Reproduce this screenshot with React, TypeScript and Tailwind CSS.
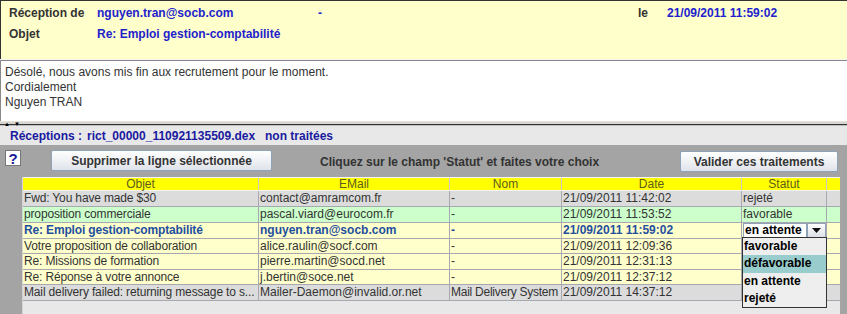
// Mail reception screen: header of the selected message, its body, and the
// list of received mails with a status combo per row.

const FONT = { fontFamily: '"Liberation Sans", Arial, sans-serif' };

type Row = {
  objet: string;
  email: string;
  nom: string;
  date: string;
  statut: string;
  bg: string;
  h: string;
  selected?: boolean;
};

const ROWS: Row[] = [
  { objet: 'Fwd: You have made $30', email: 'contact@amramcom.fr', nom: '-', date: '21/09/2011 11:42:02', statut: 'rejeté', bg: 'bg-[#dcdcdc]', h: 'h-[16px]' },
  { objet: 'proposition commerciale', email: 'pascal.viard@eurocom.fr', nom: '-', date: '21/09/2011 11:53:52', statut: 'favorable', bg: 'bg-[#ccffcc]', h: 'h-[16px]' },
  { objet: 'Re: Emploi gestion-comptabilité', email: 'nguyen.tran@socb.com', nom: '-', date: '21/09/2011 11:59:02', statut: 'en attente', bg: 'bg-[#ffffcc]', h: 'h-[16px]', selected: true },
  { objet: 'Votre proposition de collaboration', email: 'alice.raulin@socf.com', nom: '-', date: '21/09/2011 12:09:36', statut: '', bg: 'bg-[#ffffcc]', h: 'h-[15px]' },
  { objet: 'Re: Missions de formation', email: 'pierre.martin@socd.net', nom: '-', date: '21/09/2011 12:31:13', statut: '', bg: 'bg-[#ffffcc]', h: 'h-[16px]' },
  { objet: 'Re: Réponse à votre annonce', email: 'j.bertin@soce.net', nom: '-', date: '21/09/2011 12:37:12', statut: '', bg: 'bg-[#ffffcc]', h: 'h-[15px]' },
  { objet: 'Mail delivery failed: returning message to s...', email: 'Mailer-Daemon@invalid.or.net', nom: 'Mail Delivery System', date: '21/09/2011 14:37:12', statut: '', bg: 'bg-[#dcdcdc]', h: 'h-[16px]' },
];

const COLS = ['w-[236px]', 'w-[191px]', 'w-[112px]', 'w-[180px]', 'w-[85px]'];

function Cell({ w, children, cls = '' }: { w: string; children?: React.ReactNode; cls?: string }) {
  return (
    <div className={`${w} shrink-0 overflow-hidden whitespace-nowrap border-r border-[#a8a8b0] pl-[1px] leading-[15px] ${cls}`}>
      {children}
    </div>
  );
}

function Button({ label, w }: { label: string; w: string }) {
  return (
    <div
      className={`${w} flex h-[21px] items-center justify-center rounded-[2px] border border-[#8fa3b8] bg-gradient-to-b from-white to-[#dfe3ea] text-[12px] font-bold text-[#333]`}
    >
      {label}
    </div>
  );
}

export default function App() {
  return (
    <div style={FONT} className="flex h-[314px] w-[847px] flex-col overflow-hidden bg-white text-[12px] text-[#333]">
      {/* message header */}
      <div className="h-[59px] shrink-0 border-l border-t border-[#333] bg-[#ffffcc] pt-[5px] font-bold">
        <div className="flex h-[21px] leading-[14px]">
          <span className="w-[96px] shrink-0 pl-[8px]">Réception de</span>
          <span className="w-[221px] shrink-0 text-[#2222cc]">nguyen.tran@socb.com</span>
          <span className="w-[320px] shrink-0 text-[#2222cc]">-</span>
          <span className="w-[29px] shrink-0">le</span>
          <span className="text-[#2222cc]">21/09/2011 11:59:02</span>
        </div>
        <div className="flex h-[21px] leading-[14px]">
          <span className="w-[96px] shrink-0 pl-[8px]">Objet</span>
          <span className="text-[#2222cc]">Re: Emploi gestion-comptabilité</span>
        </div>
      </div>
      <div className="h-[1px] shrink-0 bg-[#f4f4f4]" />

      {/* message body */}
      <div className="h-[61px] shrink-0 border-l border-t border-[#8a8a8a] pl-[4px] pt-[4px] leading-[15px]">
        <p>Désolé, nous avons mis fin aux recrutement pour le moment.</p>
        <p>Cordialement</p>
        <p>Nguyen TRAN</p>
      </div>

      {/* splitter */}
      <div className="relative h-[3px] shrink-0 border-t border-[#e6e2cf] bg-[#d6d6d6]">
        <span className="absolute left-[4px] top-[-1px] text-[6px] leading-[6px] text-black">▲</span>
        <span className="absolute left-[14px] top-[-1px] text-[6px] leading-[6px] text-black">▼</span>
      </div>
      <div className="h-[2px] shrink-0 border-t border-[#333] bg-[#bdbdbd]" />

      {/* receptions bar */}
      <div className="flex h-[19px] shrink-0 items-center bg-[#e8e8e8] pl-[10px] font-bold text-[#1a1aa0]">
        <span className="w-[77px]">Réceptions :</span>
        <span className="w-[178px]">rict_00000_110921135509.dex</span>
        <span>non traitées</span>
      </div>

      {/* list panel */}
      <div className="flex-1 bg-[#a4a4a4]">
        <div className="flex items-start pl-[5px] pt-[5px]">
          <div className="flex h-[16px] w-[16px] items-center justify-center border border-[#777] bg-white text-[15px] font-bold leading-none text-[#1a1a99]">
            ?
          </div>
          <div className="ml-[30px]">
            <Button label="Supprimer la ligne sélectionnée" w="w-[221px]" />
          </div>
          <span className="ml-[48px] mt-[3px] font-bold text-[#333]">Cliquez sur le champ 'Statut' et faites votre choix</span>
          <div className="ml-auto mr-[9px] mt-[1px]">
            <Button label="Valider ces traitements" w="w-[158px]" />
          </div>
        </div>

        {/* table */}
        <div className="relative ml-[22px] mt-[5px] h-[150px] w-[818px] border-l border-[#d4d4d4] bg-[#e8e8e8]">
          <div className="flex h-[14px] border-b border-t border-[#f4f4f4] bg-[#ffff00] text-center leading-[12px] text-[#5c5c1e]">
            {['Objet', 'EMail', 'Nom', 'Date', 'Statut'].map((t, i) => (
              <div key={t} className={`${COLS[i]} shrink-0 border-r border-[#c8c8c8]`}>
                {t}
              </div>
            ))}
          </div>
          {ROWS.map((r) => (
            <div
              key={r.date}
              className={`flex ${r.h} border-b border-[#a8a8b0] ${r.bg} ${r.selected ? 'font-bold text-[#1f4f9f]' : 'text-[#333]'}`}
            >
              <Cell w={COLS[0]} cls="tracking-[-0.15px]">{r.objet}</Cell>
              <Cell w={COLS[1]}>{r.email}</Cell>
              <Cell w={COLS[2]} cls="tracking-[-0.25px]">{r.nom}</Cell>
              <Cell w={COLS[3]}>{r.date}</Cell>
              <Cell w={COLS[4]} cls={r.selected ? 'pl-0' : ''}>
                {r.selected ? (
                  <div className="flex h-[15px] text-black">
                    <div className="w-[64px] border border-[#8fa3b8] bg-white pl-[1px] leading-[13px]">en attente</div>
                    <div className="flex w-[19px] items-center justify-center border border-[#8fa3b8] bg-gradient-to-b from-white to-[#dcdfe5]">
                      <svg width="9" height="5" viewBox="0 0 9 5">
                        <path d="M0 0h9L4.5 5z" fill="#111" />
                      </svg>
                    </div>
                  </div>
                ) : (
                  r.statut
                )}
              </Cell>
            </div>
          ))}

          {/* open combo list */}
          <div className="absolute left-[719px] top-[60px] w-[85px] border border-[#333] bg-[#eeeeee] font-bold leading-[17px] text-black">
            <div className="h-[17px] pl-[1px]">favorable</div>
            <div className="h-[18px] bg-[#99cccc] pl-[1px]">défavorable</div>
            <div className="h-[17px] pl-[1px]">en attente</div>
            <div className="h-[17px] pl-[1px]">rejeté</div>
          </div>
        </div>
      </div>
    </div>
  );
}
